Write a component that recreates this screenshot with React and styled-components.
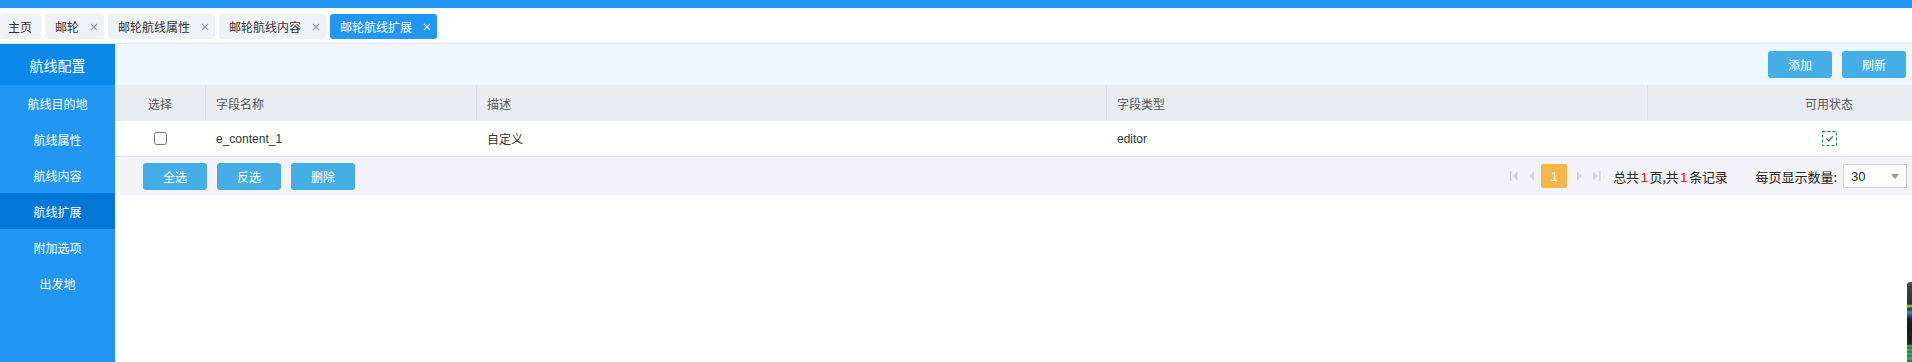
import React from 'react';
import styled, { createGlobalStyle } from 'styled-components';

const tabs = [
  { label: '主页', fixed: true },
  { label: '邮轮' },
  { label: '邮轮航线属性' },
  { label: '邮轮航线内容' },
  { label: '邮轮航线扩展', active: true },
];

const menu = ['航线目的地', '航线属性', '航线内容', '航线扩展', '附加选项', '出发地'];

const columns = ['选择', '字段名称', '描述', '字段类型', '可用状态'];

const rows = [{ name: 'e_content_1', desc: '自定义', type: 'editor', enabled: true }];

const CloseIcon = ({ color }) => (
  <svg width="8" height="8" viewBox="0 0 8 8">
    <path d="M1 1L7 7M7 1L1 7" stroke={color} strokeWidth="1.2" />
  </svg>
);

const StatusIcon = () => (
  <svg width="15" height="15" viewBox="0 0 15 15">
    <rect x="0.5" y="0.5" width="14" height="14" fill="none" stroke="#1c7a3c" strokeDasharray="3 2" />
    <path d="M4.5 7.5L6.8 9.8L10.8 5.3" fill="none" stroke="#1c7a3c" strokeWidth="1.2" />
  </svg>
);

const PagerIcon = ({ kind }) => {
  const shapes = {
    first: (
      <>
        <rect x="0" y="0" width="1.6" height="10" />
        <path d="M7.5 0.5V9.5L2.5 5Z" />
      </>
    ),
    prev: <path d="M5 0.5V9.5L0 5Z" />,
    next: <path d="M0 0.5V9.5L5 5Z" />,
    last: (
      <>
        <path d="M0 0.5V9.5L5 5Z" />
        <rect x="6" y="0" width="1.6" height="10" />
      </>
    ),
  };
  const w = kind === 'prev' || kind === 'next' ? 5 : 8;
  return (
    <svg width={w} height="10" viewBox={`0 0 ${w} 10`} fill="#d4d4d4">
      {shapes[kind]}
    </svg>
  );
};

const App = () => (
  <Page>
    <GlobalStyle />
    <TopBar />
    <TabBar>
      {tabs.map((t) => (
        <Tab key={t.label} $active={t.active} $fixed={t.fixed}>
          {t.label}
          {!t.fixed && (
            <TabClose>
              <CloseIcon color={t.active ? '#dbeeff' : '#9a9a9a'} />
            </TabClose>
          )}
        </Tab>
      ))}
    </TabBar>
    <Body>
      <Sidebar>
        <SideHeader>航线配置</SideHeader>
        {menu.map((m) => (
          <SideItem key={m} $active={m === '航线扩展'}>
            {m}
          </SideItem>
        ))}
      </Sidebar>
      <Main>
        <Toolbar>
          <ActionButton>添加</ActionButton>
          <ActionButton>刷新</ActionButton>
        </Toolbar>
        <HeadRow>
          {columns.map((c, i) => (
            <HeadCell key={c} $col={i}>
              {c}
            </HeadCell>
          ))}
        </HeadRow>
        {rows.map((r) => (
          <DataRow key={r.name}>
            <Cell $col={0}>
              <Check type="checkbox" />
            </Cell>
            <Cell $col={1}>{r.name}</Cell>
            <Cell $col={2}>{r.desc}</Cell>
            <Cell $col={3}>{r.type}</Cell>
            <Cell $col={4}>{r.enabled && <StatusIcon />}</Cell>
          </DataRow>
        ))}
        <Footer>
          <ButtonGroup>
            <ActionButton>全选</ActionButton>
            <ActionButton>反选</ActionButton>
            <ActionButton>删除</ActionButton>
          </ButtonGroup>
          <Pager>
            <PagerIcon kind="first" />
            <PagerIcon kind="prev" />
            <PageNum>1</PageNum>
            <PagerIcon kind="next" />
            <PagerIcon kind="last" />
            <PageInfo>
              总共<Red>1</Red>页,共<Red>1</Red>条记录
            </PageInfo>
            <SizeLabel>每页显示数量:</SizeLabel>
            <SizeSelect>
              30
              <Caret />
            </SizeSelect>
          </Pager>
        </Footer>
      </Main>
    </Body>
    <Widget />
  </Page>
);

export default App;

const GlobalStyle = createGlobalStyle`
  html, body {
    margin: 0;
    padding: 0;
    background: #fff;
  }
  body {
    font-family: "Liberation Sans", "Noto Sans CJK SC", sans-serif;
    font-size: 12px;
    color: #333;
  }
`;

const Page = styled.div`
  position: relative;
  min-height: 100vh;
  display: flex;
  flex-direction: column;
  overflow: hidden;
`;

const TopBar = styled.div`
  height: 8px;
  background: #2196f3;
`;

const TabBar = styled.div`
  height: 36px;
  display: flex;
  align-items: flex-start;
  gap: 4px;
  padding-top: 6px;
  box-sizing: border-box;
  border-bottom: 1px solid #e3e7ee;
  box-shadow: 0 1px 2px rgba(0, 0, 0, 0.04);
`;

const Tab = styled.div`
  height: 25px;
  display: flex;
  align-items: center;
  padding: ${({ $fixed }) => ($fixed ? '0 9px 0 8px' : '0 6px 0 10px')};
  font-size: 12px;
  border-radius: 3px;
  background: ${({ $active }) => ($active ? '#2196f3' : '#eef1f6')};
  color: ${({ $active }) => ($active ? '#fff' : '#333')};
`;

const TabClose = styled.span`
  display: flex;
  margin-left: 11px;
`;

const Body = styled.div`
  flex: 1;
  display: flex;
`;

const Sidebar = styled.div`
  width: 115px;
  flex-shrink: 0;
  background: #2196f3;
  color: #fff;
`;

const SideHeader = styled.div`
  height: 41px;
  display: flex;
  align-items: center;
  justify-content: center;
  font-size: 14px;
  background: #0c88e9;
`;

const SideItem = styled.div`
  height: 36px;
  display: flex;
  align-items: center;
  justify-content: center;
  font-size: 12px;
  background: ${({ $active }) => ($active ? '#0277d6' : 'transparent')};
`;

const Main = styled.div`
  flex: 1;
  display: flex;
  flex-direction: column;
`;

const Toolbar = styled.div`
  height: 41px;
  display: flex;
  align-items: center;
  justify-content: flex-end;
  gap: 10px;
  padding-right: 6px;
  background: #eff7fe;
`;

const ActionButton = styled.button`
  width: 64px;
  height: 27px;
  padding: 0;
  border: none;
  border-radius: 3px;
  background: #45aee4;
  color: #fff;
  font-family: inherit;
  font-size: 12px;
  cursor: pointer;
`;

const gridCols = '91px 271px 630px 541px 1fr';

const HeadRow = styled.div`
  display: grid;
  grid-template-columns: ${gridCols};
  height: 36px;
  background: #e9ecf1;
`;

const HeadCell = styled.div`
  display: flex;
  align-items: center;
  justify-content: ${({ $col }) => ($col === 0 || $col === 4 ? 'center' : 'flex-start')};
  padding-left: ${({ $col }) => ($col === 4 ? '98px' : $col === 0 ? '0' : '10px')};
  border-right: ${({ $col }) => ($col === 4 ? 'none' : '1px solid #dde1e7')};
  color: #555;
  font-size: 12px;
`;

const DataRow = styled.div`
  display: grid;
  grid-template-columns: ${gridCols};
  height: 35px;
  border-bottom: 1px solid #e3e6eb;
  background: #fff;
`;

const Cell = styled.div`
  display: flex;
  align-items: center;
  justify-content: ${({ $col }) => ($col === 0 || $col === 4 ? 'center' : 'flex-start')};
  padding-left: ${({ $col }) => ($col === 4 ? '98px' : $col === 0 ? '0' : '10px')};
  padding-right: ${({ $col }) => ($col === 0 ? '1px' : '0')};
  color: #333;
  font-size: 12px;
`;

const Check = styled.input`
  width: 13px;
  height: 13px;
  margin: 0;
`;

const Footer = styled.div`
  height: 38px;
  display: flex;
  align-items: center;
  justify-content: space-between;
  padding: 0 5px 0 28px;
  background: #f4f4f8;
`;

const ButtonGroup = styled.div`
  display: flex;
  gap: 10px;
`;

const Pager = styled.div`
  display: flex;
  align-items: center;
  gap: 11px;
  font-family: "Noto Sans CJK SC", sans-serif;
  font-size: 13px;
  color: #222;
`;

const PageNum = styled.div`
  width: 26px;
  height: 24px;
  display: flex;
  align-items: center;
  justify-content: center;
  border-radius: 2px;
  background: #f5b64c;
  color: #fff;
  font-family: "Liberation Sans", sans-serif;
  font-size: 13px;
  margin: 0 -1px 0 -4px;
`;

const PageInfo = styled.span`
  margin-left: 1px;
  letter-spacing: -0.3px;
`;

const Red = styled.span`
  color: #e60000;
  margin: 0 2px;
  font-family: "Liberation Sans", sans-serif;
`;

const SizeLabel = styled.span`
  margin-left: 17px;
  margin-right: -5px;
`;

const SizeSelect = styled.div`
  position: relative;
  width: 64px;
  height: 24px;
  box-sizing: border-box;
  display: flex;
  align-items: center;
  padding-left: 7px;
  border: 1px solid #cfcfcf;
  background: #fff;
  font-family: "Liberation Sans", sans-serif;
  font-size: 13px;
  color: #222;
`;

const Caret = styled.span`
  position: absolute;
  right: 7px;
  top: 9px;
  border-left: 4px solid transparent;
  border-right: 4px solid transparent;
  border-top: 5px solid #999;
`;

const Widget = styled.div`
  position: absolute;
  right: 0;
  top: 282px;
  width: 5px;
  height: 80px;
  border-radius: 3px 0 0 0;
  background: linear-gradient(
    to bottom,
    #5a5f63 0,
    #3a4046 4px,
    #2d3338 22px,
    #a6d33c 24px,
    #2d3338 27px,
    #2a8fd6 30px,
    #1b2a35 36px,
    #15181b 40px,
    #1d2024 62px,
    #3bbf5c 64px,
    #2a6d3e 66px,
    #3bbf5c 68px,
    #2a6d3e 70px,
    #3bbf5c 72px,
    #2a6d3e 74px,
    #3bbf5c 76px,
    #2a6d3e 80px
  );
`;
